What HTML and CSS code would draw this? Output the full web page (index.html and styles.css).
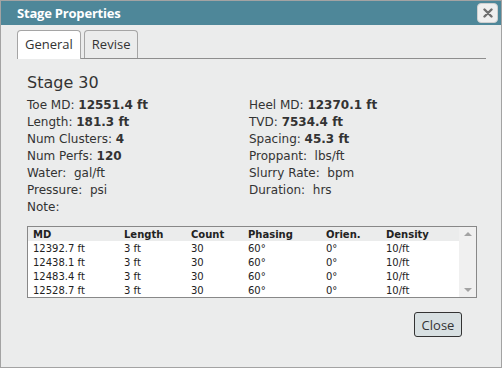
FILE: index.html
```html
<!DOCTYPE html>
<html lang="en">
<head>
    <meta charset="UTF-8">
    <title>Stage Properties</title>
    <link rel="stylesheet" href="styles.css">
</head>
<body>
    <div class="dialog">
        <div class="titlebar">
            <span class="title">Stage Properties</span>
            <button class="close-x" title="Close">
                <svg width="10" height="10" viewBox="0 0 10 10">
                    <path d="M1.5 1.5 L8.5 8.5 M8.5 1.5 L1.5 8.5" stroke="#6f6f6f" stroke-width="2.4" stroke-linecap="round"/>
                </svg>
            </button>
        </div>

        <div class="tabs">
            <div class="tab active">General</div>
            <div class="tab">Revise</div>
        </div>

        <div class="panel">
            <h2>Stage 30</h2>
            <div class="props">
                <div class="col">
                    <p>Toe MD: <b>12551.4 ft</b></p>
                    <p>Length: <b>181.3 ft</b></p>
                    <p>Num Clusters: <b>4</b></p>
                    <p>Num Perfs: <b>120</b></p>
                    <p>Water: &nbsp;gal/ft</p>
                    <p>Pressure: &nbsp;psi</p>
                    <p>Note:</p>
                </div>
                <div class="col">
                    <p>Heel MD: <b>12370.1 ft</b></p>
                    <p>TVD: <b>7534.4 ft</b></p>
                    <p>Spacing: <b>45.3 ft</b></p>
                    <p>Proppant: &nbsp;lbs/ft</p>
                    <p>Slurry Rate: &nbsp;bpm</p>
                    <p>Duration: &nbsp;hrs</p>
                </div>
            </div>

            <div class="grid">
                <table>
                    <thead>
                        <tr><th>MD</th><th>Length</th><th>Count</th><th>Phasing</th><th>Orien.</th><th>Density</th></tr>
                    </thead>
                    <tbody>
                        <tr><td>12392.7 ft</td><td>3 ft</td><td>30</td><td>60°</td><td>0°</td><td>10/ft</td></tr>
                        <tr><td>12438.1 ft</td><td>3 ft</td><td>30</td><td>60°</td><td>0°</td><td>10/ft</td></tr>
                        <tr><td>12483.4 ft</td><td>3 ft</td><td>30</td><td>60°</td><td>0°</td><td>10/ft</td></tr>
                        <tr><td>12528.7 ft</td><td>3 ft</td><td>30</td><td>60°</td><td>0°</td><td>10/ft</td></tr>
                    </tbody>
                </table>
                <div class="scrollbar">
                    <span class="arrow up"></span>
                    <span class="arrow down"></span>
                </div>
            </div>

            <div class="buttons">
                <button class="btn">Close</button>
            </div>
        </div>
    </div>
</body>
</html>
```

FILE: styles.css
```css
body {
    margin: 0;
    padding: 0;
    font-family: "DejaVu Sans", Verdana, sans-serif;
    background-color: #ffffff;
}
.dialog {
    width: 500px;
    height: 366px;
    border: 1px solid #a3a3a3;
    background-color: #ebecec;
    display: flex;
    flex-direction: column;
}
.titlebar {
    height: 24px;
    background-color: #4e8799;
    display: flex;
    align-items: center;
    justify-content: space-between;
    padding: 0 3px 0 16px;
}
.title {
    color: white;
    font-family: "Open Sans", sans-serif;
    font-weight: bold;
    font-size: 13px;
    letter-spacing: -0.2px;
}
.close-x {
    width: 21px;
    height: 20px;
    border: 1px solid #cfcfcf;
    border-radius: 4px;
    background-color: #efefef;
    padding: 0;
    display: flex;
    align-items: center;
    justify-content: center;
}
.tabs {
    display: flex;
    gap: 3px;
    margin: 5px 15px 0 16px;
    border-bottom: 1px solid #8e8e8e;
    height: 28px;
}
.tab {
    font-family: "Open Sans", sans-serif;
    font-size: 13px;
    color: #333;
    padding: 0 7px;
    line-height: 26px;
    border: 1px solid #a5a5a5;
    border-bottom: none;
    border-radius: 4px 4px 0 0;
    background-color: #ebecec;
}
.tab.active {
    background-color: white;
    height: 28px;
    margin-bottom: -1px;
}
.panel {
    padding: 14px 26px 0 26px;
    color: #333;
}
h2 {
    font-size: 16px;
    font-weight: normal;
    margin: 0 0 5px 0;
}
.props {
    display: flex;
}
.col {
    width: 222px;
}
.col p {
    font-size: 12px;
    margin: 0;
    height: 17px;
    line-height: 17px;
}
.grid {
    margin-top: 10px;
    width: 448px;
    height: 70px;
    border: 1px solid #888;
    display: flex;
    background-color: white;
}
table {
    flex: 1;
    border-collapse: collapse;
    font-size: 10px;
    color: #222;
}
th {
    text-align: left;
    background-color: #ebecec;
    height: 14px;
    padding: 0 0 0 5px;
}
td {
    height: 14px;
    padding: 0 0 0 5px;
}
th:nth-child(1) { width: 86px; }
th:nth-child(2) { width: 62px; }
th:nth-child(3) { width: 52px; }
th:nth-child(4) { width: 73px; }
th:nth-child(5) { width: 55px; }
.scrollbar {
    width: 17px;
    background-color: #f0f0f0;
    display: flex;
    flex-direction: column;
    justify-content: space-between;
    align-items: center;
    padding: 5px 0;
}
.arrow {
    width: 0;
    height: 0;
    border-left: 4px solid transparent;
    border-right: 4px solid transparent;
}
.arrow.up {
    border-bottom: 4px solid #a3a3a3;
}
.arrow.down {
    border-top: 4px solid #a3a3a3;
}
.buttons {
    display: flex;
    justify-content: flex-end;
    padding: 14px 13px 0 0;
}
.btn {
    font-family: "Open Sans", sans-serif;
    font-size: 13px;
    color: #333;
    background-color: #d8e0e2;
    border: 1px solid #333;
    border-radius: 3px;
    width: 48px;
    height: 25px;
    padding: 0;
}
```
